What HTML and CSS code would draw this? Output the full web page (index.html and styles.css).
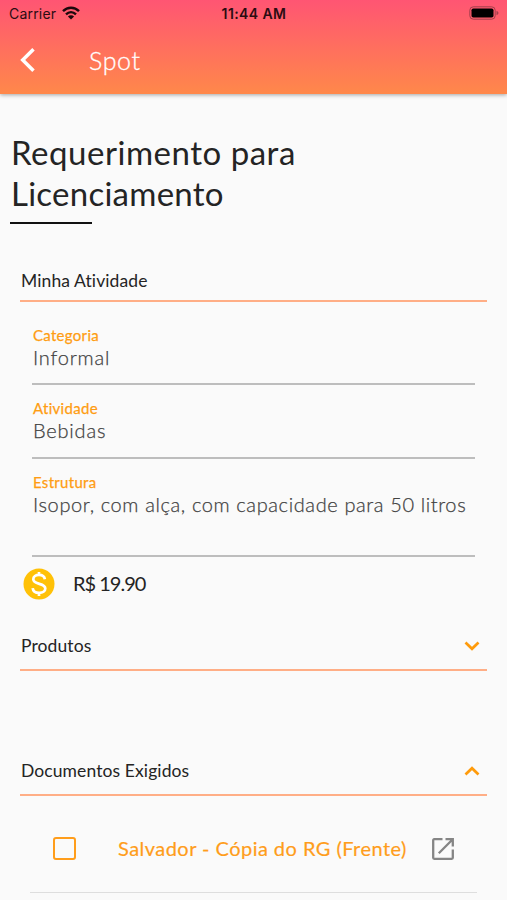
FILE: index.html
```html
<!DOCTYPE html>
<html lang="pt-BR">
<head>
<meta charset="utf-8">
<meta name="viewport" content="width=device-width, initial-scale=1">
<title>Spot</title>
<link rel="stylesheet" href="styles.css">
</head>
<body>
<header class="top">
  <div class="status">
    <div class="carrier"><span>Carrier</span>
      <svg width="18" height="14" viewBox="0 0 18 14"><g fill="none" stroke="#1c080c" stroke-width="2.4"><path d="M1 5.2C5.5.6 12.500.6 17 5.200"/><path d="M4 8.300C7 5.400 11 5.400 14 8.300"/></g><path d="M9 13.600 5.900 10.400C7.500 8.900 10.500 8.900 12.100 10.400Z" fill="#1c080c"/></svg>
    </div>
    <span class="clock">11:44 AM</span>
    <svg class="battery" width="30" height="14" viewBox="0 0 30 14"><rect x=".8" y=".8" width="25.400" height="12.400" rx="3.500" fill="none" stroke="#a33f4c"/><rect x="2.500" y="2.500" width="22" height="9" rx="1.800"/><path d="M27.500 4.800Q29.500 5.500 29.500 7T27.500 9.200Z" fill="#a33f4c"/></svg>
  </div>
  <nav class="bar">
    <svg width="16" height="26" viewBox="0 0 16 26"><path d="M13.500 2.200 2.700 13 13.500 23.800" fill="none" stroke="#fff" stroke-width="3.500"/></svg>
    <span class="app-name">Spot</span>
  </nav>
</header>
<main>
  <h1>Requerimento para<br><span class="second">Licenciamento</span></h1>
  <div class="rule"></div>

  <section class="section activity">
    <h2 class="head"><span>Minha Atividade</span></h2>
    <div class="field"><label>Categoria</label><p class="short">Informal</p></div>
    <div class="field"><label>Atividade</label><p class="short">Bebidas</p></div>
    <div class="field tall"><label>Estrutura</label><p>Isopor, com alça, com capacidade para 50 litros</p></div>
    <div class="price">
      <svg width="32" height="32" viewBox="0 0 32 32"><circle cx="16" cy="16" r="15.500" fill="#ffc107"/><path d="M21.900 11.300C21.400 8.300 18.900 6.900 16 6.900c-3.200 0-5.700 1.700-5.700 4.300 0 5.900 12 3.400 12 9.300 0 2.700-2.700 4.400-6.100 4.400-3.500 0-6.200-1.600-6.500-4.800M16 4v3.500M16 24.500v3.500" fill="none" stroke="#fff" stroke-width="2.700"/></svg>
      <span class="amount">R$ 19.90</span>
    </div>
  </section>

  <section class="section products">
    <h2 class="head toggle"><span>Produtos</span>
      <svg width="16" height="10" viewBox="0 0 16 10"><path d="m1.500 1.500 6.500 6.300 6.500-6.300" fill="none" stroke="#ff9b0b" stroke-width="2.700"/></svg></h2>
  </section>

  <section class="section documents">
    <h2 class="head toggle"><span>Documentos Exigidos</span>
      <svg width="16" height="10" viewBox="0 0 16 10"><path d="m1.500 8.500 6.500-6.300 6.500 6.300" fill="none" stroke="#ff9b0b" stroke-width="2.700"/></svg></h2>
    <div class="doc">
      <span class="check"></span>
      <span class="doc-name">Salvador - Cópia do RG (Frente)</span>
      <svg width="24" height="24" viewBox="0 0 24 24"><path d="M11.500 2.200H3.200Q2.200 2.200 2.200 3.200V20.800Q2.200 21.800 3.200 21.800H20.800Q21.800 21.800 21.800 20.800V12.500M14.500 2.200H21.800V9.500M21.500 2.500 7.800 16.200" fill="none" stroke="#858585" stroke-width="2.300"/></svg>
    </div>
  </section>
</main>
</body>
</html>
```
FILE: styles.css
```css
* { box-sizing: border-box; }
body {
  margin: 0;
  height: 900px;
  overflow: hidden;
  background: #fafafa;
  color: #242424;
  font-family: Lato, "Open Sans", sans-serif;
  font-variant-ligatures: none;
}
svg { display: block; flex: none; }
span, label, p { white-space: nowrap; }

.top {
  height: 94px;
  background: linear-gradient(#ff5573, #ff884a);
  box-shadow: 0 1px 4px rgba(0, 0, 0, .35);
}
.status {
  display: grid;
  grid-template-columns: 1fr auto 1fr;
  align-items: center;
  height: 27px;
  padding: 0 8px 0 9px;
  font: 14px/27px Inter, sans-serif;
  color: #2b0c12;
}
.carrier { display: flex; align-items: center; gap: 6px; letter-spacing: .2px; }
.carrier svg { margin-top: -2px; }
.clock { font-weight: 600; letter-spacing: .4px; }
.battery { justify-self: end; margin-top: -1px; }
.bar { display: flex; align-items: center; height: 67px; padding: 0 0 2px 20px; }
.app-name { margin-left: 53px; font-size: 25px; line-height: 30px; font-weight: 300; color: #fff; letter-spacing: .6px; -webkit-text-stroke: .3px #fff; }

h1 { margin: 38px 0 0 11px; font-size: 33px; line-height: 40.500px; font-weight: 400; letter-spacing: .52px; }
.second { letter-spacing: .25px; }
.rule { width: 82px; height: 2px; margin: 9px 0 0 10px; background: #111; }

.section { margin: 0 20px; }
.activity { margin-top: 38px; }
.head {
  display: flex;
  align-items: center;
  justify-content: space-between;
  height: 40px;
  margin: 0;
  padding: 0 7px 0 1px;
  border-bottom: 2px solid #ffae86;
  font-size: 17.500px;
  line-height: 24px;
  font-weight: 400;
  letter-spacing: .1px;
}
.head.toggle { padding-bottom: 8px; }
.field { height: 73.500px; margin: 0 12px; padding: 13px 0 0 1px; border-bottom: 2px solid #bdbdbd; }
.activity .head + .field { height: 83px; padding-top: 23px; }
.field.tall { height: 98px; }
.field label { display: block; font-size: 15px; line-height: 20px; color: #ff9d12; letter-spacing: .3px; -webkit-text-stroke: .25px #ff9d12; }
.field p { margin: 0; font-size: 20px; line-height: 25px; font-weight: 300; color: #424242; letter-spacing: .62px; -webkit-text-stroke: .25px #424242; }
.field .short { letter-spacing: .8px; }
.price { display: flex; align-items: center; gap: 18px; height: 54px; padding-left: 3px; font-size: 20px; }
.amount { letter-spacing: -1px; padding-bottom: 1px; }
.products { margin-top: 20px; }
.documents { margin-top: 85px; }
.doc { display: flex; align-items: center; height: 97px; margin: 0 10px; padding: 10px 22px 0 23px; border-bottom: 1px solid #dedede; }
.check { width: 23px; height: 23px; border: 2.500px solid #ff9d1b; border-radius: 3px; }
.doc-name { flex: 1; margin-left: 42px; padding-bottom: 1px; font-size: 20px; color: #ff9d1b; letter-spacing: .46px; -webkit-text-stroke: .2px #ff9d1b; }
```
